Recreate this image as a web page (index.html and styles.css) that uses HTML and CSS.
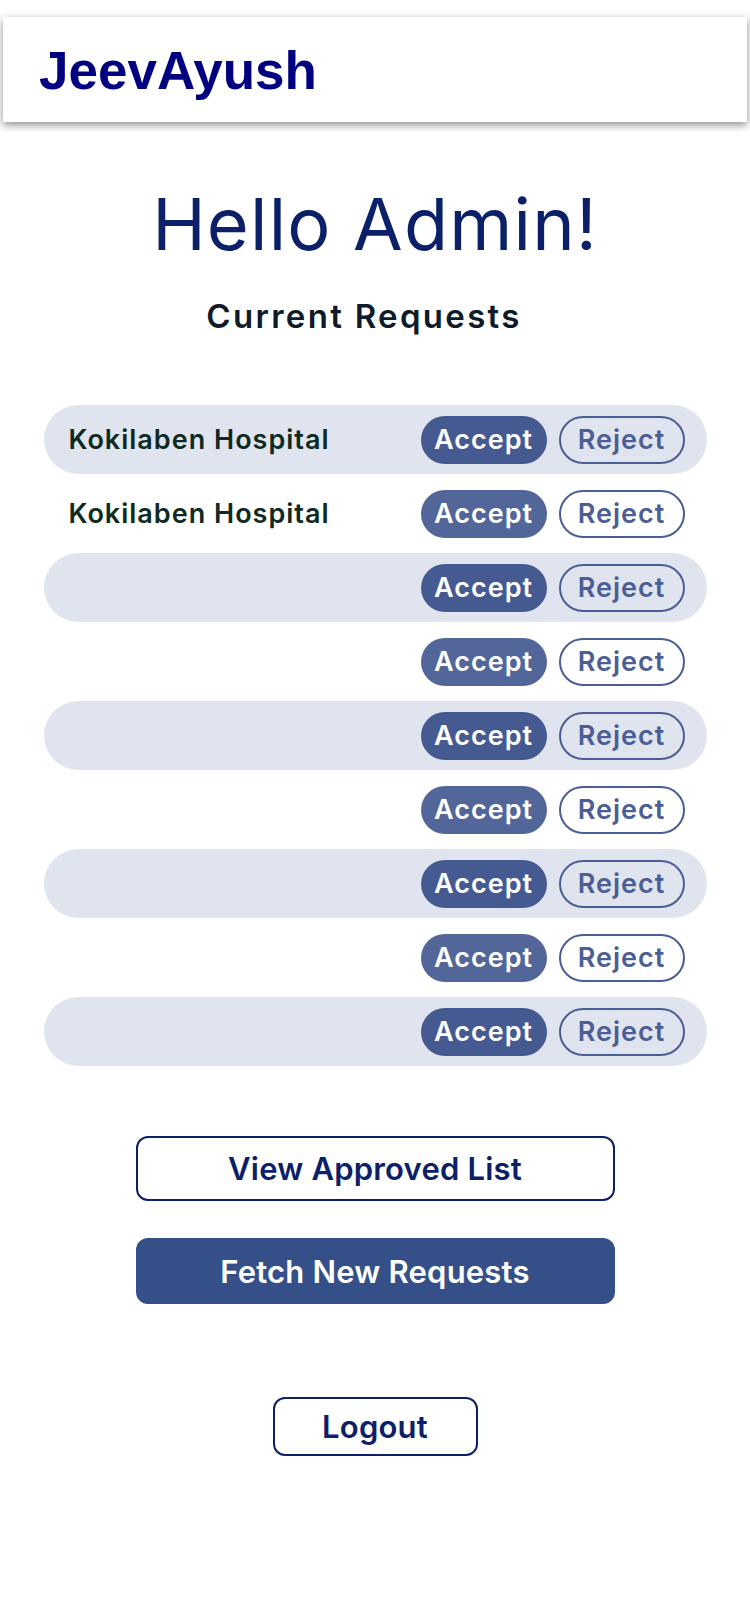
FILE: index.html
```html
<!DOCTYPE html>
<html>
<head>
<meta charset="utf-8">
<link rel="stylesheet" href="styles.css">
</head>
<body>
<header class="topbar">
  <div class="brand">JeevAyush</div>
</header>
<main class="page">
  <h1 class="greeting">Hello Admin!</h1>
  <h2 class="subtitle">Current Requests</h2>
  <div class="requests">
    <div class="req shaded"><span class="name">Kokilaben Hospital</span><div class="actions"><button class="accept">Accept</button><button class="reject">Reject</button></div></div>
    <div class="req"><span class="name">Kokilaben Hospital</span><div class="actions"><button class="accept">Accept</button><button class="reject">Reject</button></div></div>
    <div class="req shaded"><span class="name"></span><div class="actions"><button class="accept">Accept</button><button class="reject">Reject</button></div></div>
    <div class="req"><span class="name"></span><div class="actions"><button class="accept">Accept</button><button class="reject">Reject</button></div></div>
    <div class="req shaded"><span class="name"></span><div class="actions"><button class="accept">Accept</button><button class="reject">Reject</button></div></div>
    <div class="req"><span class="name"></span><div class="actions"><button class="accept">Accept</button><button class="reject">Reject</button></div></div>
    <div class="req shaded"><span class="name"></span><div class="actions"><button class="accept">Accept</button><button class="reject">Reject</button></div></div>
    <div class="req"><span class="name"></span><div class="actions"><button class="accept">Accept</button><button class="reject">Reject</button></div></div>
    <div class="req shaded"><span class="name"></span><div class="actions"><button class="accept">Accept</button><button class="reject">Reject</button></div></div>
  </div>
  <div class="controls">
    <button class="btn outline wide">View Approved List</button>
    <button class="btn solid wide">Fetch New Requests</button>
    <button class="btn outline logout">Logout</button>
  </div>
</main>
</body>
</html>
```

FILE: styles.css
```css
* { box-sizing: border-box; }
body {
  margin: 0;
  background: #ffffff;
  font-family: Inter, "Open Sans", sans-serif;
}
.topbar {
  margin: 17px 3px 0;
  height: 105px;
  background: #fff;
  box-shadow: 0 3px 8px rgba(0,0,0,0.45);
  display: flex;
  align-items: center;
  padding-left: 36px;
}
.brand {
  font-family: "Liberation Sans", Arial, sans-serif;
  font-weight: bold;
  font-size: 53px;
  color: #000080;
  line-height: 1;
  margin-top: 2px;
}
.page {
  display: flex;
  flex-direction: column;
  align-items: center;
}
.greeting {
  margin: 58px 0 0;
  font-size: 72px;
  font-weight: 400;
  line-height: 88px;
  color: #0b2068;
  letter-spacing: 1.2px;
}
.subtitle {
  margin: 28px 0 0;
  padding-right: 22px;
  font-size: 33px;
  font-weight: 600;
  line-height: 40px;
  color: #0d1b2a;
  letter-spacing: 2.3px;
}
.requests {
  margin-top: 69px;
  width: 663px;
  display: flex;
  flex-direction: column;
  gap: 5px;
}
.req {
  height: 69px;
  border-radius: 35px;
  display: flex;
  align-items: center;
  justify-content: space-between;
  padding: 0 22px 0 25px;
}
.req.shaded { background: #e0e4ef; }
.name {
  font-size: 27px;
  font-weight: 600;
  color: #0f2a22;
  letter-spacing: 1px;
}
.actions {
  display: flex;
  gap: 12px;
}
.actions button {
  width: 126px;
  height: 48px;
  border-radius: 24px;
  font-family: Inter, "Open Sans", sans-serif;
  font-size: 27px;
  font-weight: 600;
  letter-spacing: 1px;
  padding: 0;
  cursor: pointer;
}
.accept {
  background: #52669a;
  color: #fff;
  border: none;
}
.shaded .accept { background: #465a92; }
.reject {
  background: transparent;
  color: #4b5e96;
  border: 2px solid #4a5d95;
}
.controls {
  margin-top: 70px;
  display: flex;
  flex-direction: column;
  align-items: center;
}
.btn {
  font-family: Inter, "Open Sans", sans-serif;
  font-size: 31px;
  font-weight: 600;
  letter-spacing: 0.2px;
  border-radius: 12px;
  cursor: pointer;
  padding: 0;
}
.wide { width: 479px; }
.outline {
  background: #fff;
  color: #0b2068;
  border: 2px solid #0b2068;
  height: 65px;
}
.solid {
  background: #354f88;
  color: #fff;
  border: none;
  height: 66px;
  margin-top: 37px;
}
.logout {
  width: 205px;
  height: 59px;
  margin-top: 93px;
}
```
